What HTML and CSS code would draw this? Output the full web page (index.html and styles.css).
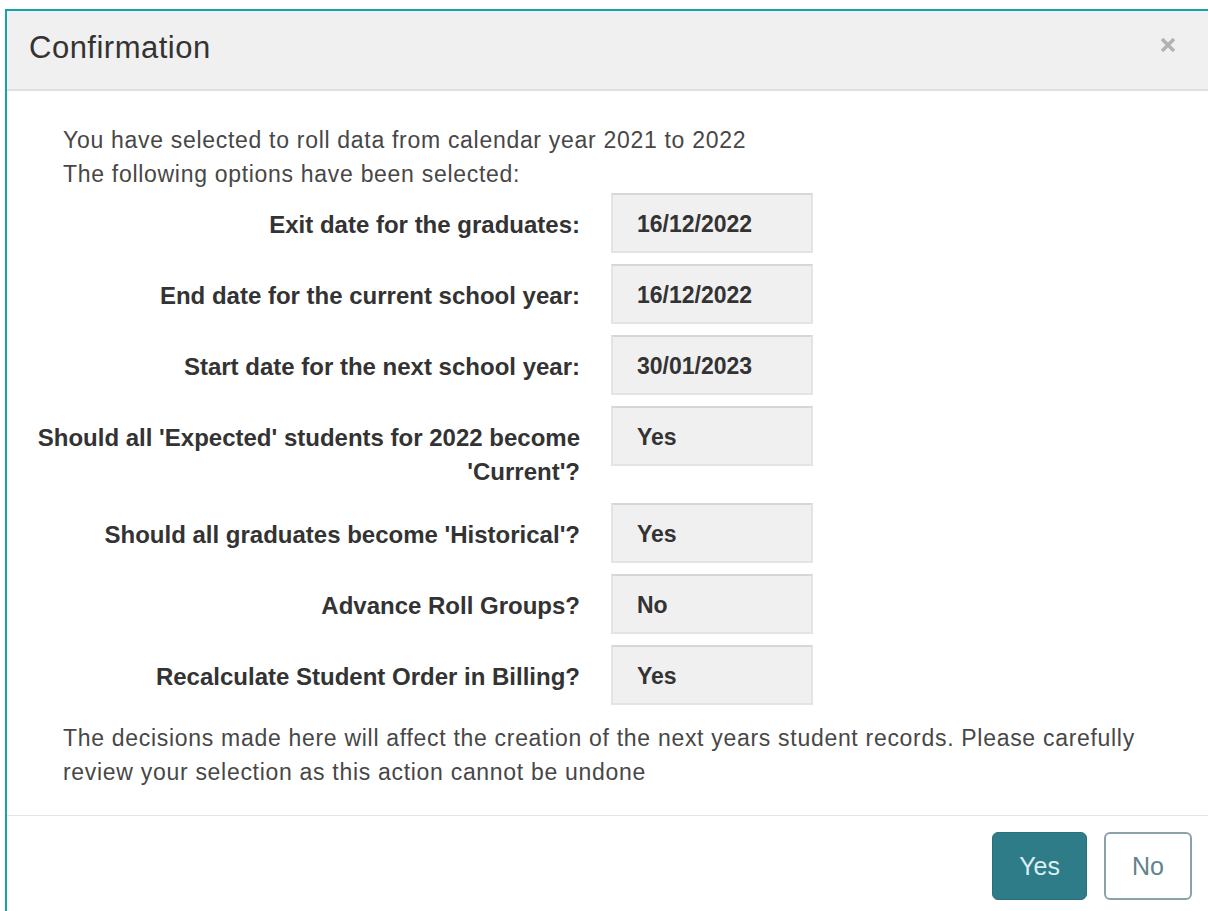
FILE: index.html
```html
<!DOCTYPE html>
<html lang="en">
<head>
<meta charset="utf-8">
<title>Confirmation</title>
<link rel="stylesheet" href="styles.css">
</head>
<body>
<div class="modal">
  <div class="modal-header">
    <h4 class="modal-title">Confirmation</h4>
    <button class="close" type="button" aria-label="Close">
      <svg viewBox="0 0 16 16" width="16" height="16" aria-hidden="true">
        <path d="M2 2 L14 14 M14 2 L2 14" stroke="currentColor" stroke-width="3.4" stroke-linecap="butt" fill="none"/>
      </svg>
    </button>
  </div>
  <div class="modal-body">
    <p class="intro">You have selected to roll data from calendar year 2021 to 2022<br>The following options have been selected:</p>
    <div class="options">
      <div class="option">
        <div class="option-label">Exit date for the graduates:</div>
        <div class="option-value">16/12/2022</div>
      </div>
      <div class="option">
        <div class="option-label">End date for the current school year:</div>
        <div class="option-value">16/12/2022</div>
      </div>
      <div class="option">
        <div class="option-label">Start date for the next school year:</div>
        <div class="option-value">30/01/2023</div>
      </div>
      <div class="option">
        <div class="option-label">Should all 'Expected' students for 2022 become 'Current'?</div>
        <div class="option-value">Yes</div>
      </div>
      <div class="option">
        <div class="option-label">Should all graduates become 'Historical'?</div>
        <div class="option-value">Yes</div>
      </div>
      <div class="option">
        <div class="option-label">Advance Roll Groups?</div>
        <div class="option-value">No</div>
      </div>
      <div class="option">
        <div class="option-label">Recalculate Student Order in Billing?</div>
        <div class="option-value">Yes</div>
      </div>
    </div>
    <p class="note">The decisions made here will affect the creation of the next years student records. Please carefully review your selection as this action cannot be undone</p>
  </div>
  <div class="modal-footer">
    <button class="btn btn-primary" type="button">Yes</button>
    <button class="btn btn-default" type="button">No</button>
  </div>
</div>
</body>
</html>
```

FILE: styles.css
```css
html, body {
  margin: 0;
  padding: 0;
  height: 100%;
  overflow: hidden;
  background: #ffffff;
}

.modal {
  margin: 9px 0 0 5px;
  border-top: 2px solid #14a3aa;
  border-left: 2px solid #14a3aa;
  font-family: "Liberation Sans", Arial, sans-serif;
  color: #474747;
}

/* header bar */
.modal-header {
  display: flex;
  justify-content: space-between;
  align-items: flex-start;
  background: #f0f0f0;
  padding: 20px 32px 24px 22px;
  border-bottom: 2px solid #e0e0e0;
}

.modal-title {
  margin: 0;
  font-size: 31px;
  line-height: 34px;
  font-weight: normal;
  letter-spacing: 0.5px;
  color: #333333;
}

.close {
  margin-top: 6px;
  padding: 0;
  border: 0;
  background: transparent;
  color: #b2b2b2;
  width: 16px;
  height: 16px;
  display: flex;
}

/* body */
.modal-body {
  padding: 32px 30px 26px 0;
}

.intro,
.note {
  margin: 0;
  padding-left: 56px;
  font-size: 23px;
  line-height: 34px;
  letter-spacing: 0.7px;
  color: #474747;
}

.options {
  margin: 2px 0 0 13px;
}

.option {
  display: grid;
  grid-template-columns: 560px 202px;
  column-gap: 31px;
  margin-bottom: 11px;
}

.option-label {
  text-align: right;
  font-weight: bold;
  font-size: 24px;
  line-height: 34px;
  padding: 15px 0 3px;
  color: #333333;
}

.option-value {
  box-sizing: border-box;
  height: 60px;
  display: flex;
  align-items: center;
  padding: 3px 0 0 24px;
  background: #f0f0f0;
  border: 2px solid #e4e4e4;
  border-top-color: #d6d6d6;
  font-weight: bold;
  font-size: 23px;
  color: #333333;
}

/* collapses with the last row's bottom margin */
.note {
  margin-top: 16px;
}

/* footer with actions */
.modal-footer {
  display: flex;
  justify-content: flex-end;
  gap: 17px;
  padding: 16px 16px 20px;
  border-top: 1px solid #e5e5e5;
}

.btn {
  box-sizing: border-box;
  height: 68px;
  padding: 0 26px;
  border-radius: 6px;
  font-family: "Liberation Sans", Arial, sans-serif;
  font-size: 25px;
}

.btn-primary {
  background: #2e7c87;
  border: 1px solid #2a707a;
  color: #d9eff1;
}

.btn-default {
  background: #ffffff;
  border: 2px solid #8ba3a8;
  color: #5f838a;
}
```
